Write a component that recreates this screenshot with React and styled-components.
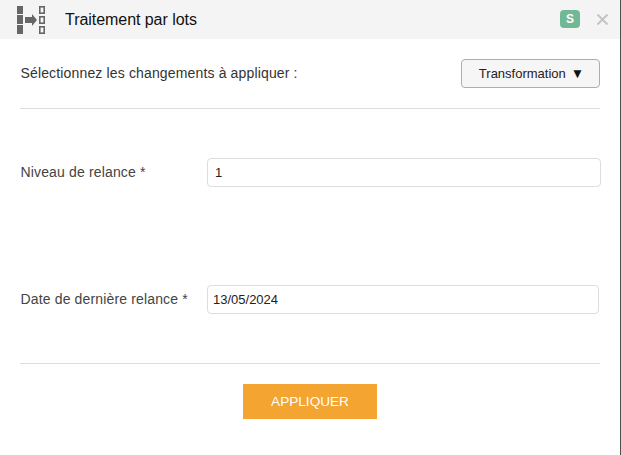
import React from "react";
import styled, { createGlobalStyle } from "styled-components";

const Global = createGlobalStyle`
  html, body { margin: 0; padding: 0; background: #fff; }
  body { font-family: "Liberation Sans", Arial, sans-serif; }
`;

const Dialog = styled.div`
  width: 620px;
  height: 455px;
  background: #fff;
  border-right: 1px solid #50504a;
  display: flex;
  flex-direction: column;
`;

const Header = styled.header`
  height: 39px;
  background: #f4f4f4;
  display: flex;
  align-items: center;
  padding: 0 12px 0 17px;
  flex-shrink: 0;
`;

const Title = styled.h1`
  margin: 0 0 0 20px;
  font-size: 16px;
  font-weight: 400;
  letter-spacing: -0.05px;
  color: #111;
  flex: 1;
`;

const Badge = styled.span`
  width: 20px;
  height: 18px;
  margin: 0 17px 1px 0;
  border-radius: 4px;
  background: #70b896;
  color: #fff;
  font-size: 12px;
  font-weight: 700;
  display: flex;
  align-items: center;
  justify-content: center;
`;

const Close = styled.svg`
  width: 11px;
  height: 11px;
  display: block;
`;

const Body = styled.div`
  padding: 0 20px;
  display: flex;
  flex-direction: column;
`;

const TopRow = styled.div`
  height: 69px;
  display: flex;
  align-items: center;
  justify-content: space-between;
  border-bottom: 1px solid #ddd;
`;

const Prompt = styled.span`
  font-size: 14px;
  letter-spacing: 0.15px;
  color: #333;
  margin: 0 0 2px 0.5px;
`;

const Dropdown = styled.button`
  width: 139px;
  height: 29px;
  padding: 0 0 0 2px;
  border: 1px solid #adadad;
  border-radius: 4px;
  background: #f6f6f6;
  color: #222;
  font-family: inherit;
  font-size: 13px;
  margin-bottom: 1px;
`;

const Caret = styled.span`
  margin-left: 5px;
  font-size: 13.5px;
  color: #111;
`;

const Field = styled.div`
  display: flex;
  align-items: center;
  margin-top: ${(p) => p.$top}px;
`;

const Label = styled.label`
  width: 187px;
  padding-left: 0.5px;
  box-sizing: border-box;
  font-size: 14px;
  letter-spacing: 0.15px;
  color: #444;
  flex-shrink: 0;
  margin-bottom: 2px;
`;

const Input = styled.input`
  box-sizing: border-box;
  flex-shrink: 0;
  width: ${(p) => p.$width}px;
  height: 29px;
  padding: 0 ${(p) => p.$pad}px;
  border: 1px solid #ddd;
  border-radius: 4px;
  background: #fff;
  color: #222;
  font-family: inherit;
  font-size: 13px;
  outline: none;
`;

const Footer = styled.div`
  margin-top: 49px;
  border-top: 1px solid #ddd;
  display: flex;
  justify-content: center;
  padding-top: 20px;
`;

const Apply = styled.button`
  width: 134px;
  height: 35px;
  border: 0;
  padding: 0;
  background: #f4a431;
  color: #fff;
  font-family: inherit;
  font-size: 13.6px;
`;

const BatchIcon = () => (
  <svg width="28" height="28" viewBox="0 0 28 28" style={{ flexShrink: 0 }}>
    <g fill="#666">
      <rect x="0" y="0" width="6" height="8" />
      <rect x="0" y="9" width="6" height="9" />
      <rect x="0" y="19" width="6" height="9" />
      <path d="M8 11h7V8l5 6-5 6v-3H8z" />
    </g>
    <g fill="#f8f8f8" stroke="#666" strokeWidth="1.6">
      <rect x="22.8" y="0.8" width="4.4" height="6.4" />
      <rect x="22.8" y="10.8" width="4.4" height="6.4" />
      <rect x="22.8" y="20.8" width="4.4" height="6.4" />
    </g>
  </svg>
);

export default function App() {
  return (
    <>
      <Global />
      <Dialog>
        <Header>
          <BatchIcon />
          <Title>Traitement par lots</Title>
          <Badge>S</Badge>
          <Close viewBox="0 0 11 11">
            <path d="M0.5 0.5L10.5 10.5M10.5 0.5L0.5 10.5" stroke="#c4c4c4" strokeWidth="2" />
          </Close>
        </Header>
        <Body>
          <TopRow>
            <Prompt>Sélectionnez les changements à appliquer :</Prompt>
            <Dropdown>Transformation<Caret>▼</Caret></Dropdown>
          </TopRow>
          <Field $top={49}>
            <Label>Niveau de relance *</Label>
            <Input $width={394} $pad={7} defaultValue="1" />
          </Field>
          <Field $top={98}>
            <Label>Date de dernière relance *</Label>
            <Input $width={392} $pad={5} defaultValue="13/05/2024" />
          </Field>
          <Footer>
            <Apply>APPLIQUER</Apply>
          </Footer>
        </Body>
      </Dialog>
    </>
  );
}
